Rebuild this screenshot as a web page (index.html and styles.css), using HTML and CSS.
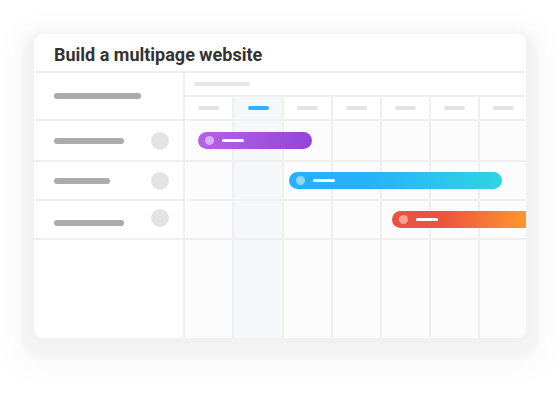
FILE: index.html
```html
<!DOCTYPE html>
<html>
<head>
<meta charset="utf-8">
<link rel="stylesheet" href="styles.css">
</head>
<body>
<div class="card">
  <div class="title">Build a multipage website</div>
  <div class="grid">
    <div class="lhead"><span class="pill pill-87"></span></div>
    <div class="rhead"><span class="hbar"></span></div>

    <div class="day c2"><span class="dbar"></span></div>
    <div class="day c3 hl"><span class="dbar blue"></span></div>
    <div class="day c4"><span class="dbar"></span></div>
    <div class="day c5"><span class="dbar"></span></div>
    <div class="day c6"><span class="dbar"></span></div>
    <div class="day c7"><span class="dbar"></span></div>
    <div class="day c8"><span class="dbar"></span></div>

    <div class="task r1"><span class="pill pill-70"></span><span class="avatar"></span></div>
    <div class="cell r1 c2"></div><div class="cell r1 c3 hl"></div><div class="cell r1 c4"></div><div class="cell r1 c5"></div><div class="cell r1 c6"></div><div class="cell r1 c7"></div><div class="cell r1 c8"></div>

    <div class="task r2"><span class="pill pill-56"></span><span class="avatar"></span></div>
    <div class="cell r2 c2"></div><div class="cell r2 c3 hl"></div><div class="cell r2 c4"></div><div class="cell r2 c5"></div><div class="cell r2 c6"></div><div class="cell r2 c7"></div><div class="cell r2 c8"></div>

    <div class="task r3 up"><span class="pill pill-70 down"></span><span class="avatar"></span></div>
    <div class="cell r3 c2"></div><div class="cell r3 c3 hl"></div><div class="cell r3 c4"></div><div class="cell r3 c5"></div><div class="cell r3 c6"></div><div class="cell r3 c7"></div><div class="cell r3 c8"></div>

    <div class="fill-left"></div>
    <div class="fill c2"></div><div class="fill c3 hl"></div><div class="fill c4"></div><div class="fill c5"></div><div class="fill c6"></div><div class="fill c7"></div><div class="fill c8"></div>

    <div class="bar purple r1" style="margin-left:15px;width:114px"><span class="dot"></span><span class="line"></span></div>
    <div class="bar blue-bar r2" style="margin-left:106px;width:213px"><span class="dot"></span><span class="line"></span></div>
    <div class="bar orange r3" style="margin-left:209px;width:140px"><span class="dot"></span><span class="line"></span></div>
  </div>
</div>
</body>
</html>
```
FILE: styles.css
```css
* { box-sizing: border-box; }
html, body { margin: 0; padding: 0; background: #fff; }
body {
  min-height: 399px;
  padding: 34px 34px 0 34px;
  font-family: Roboto, "Liberation Sans", Arial, sans-serif;
}
.card {
  width: 492px;
  height: 304px;
  background: #fff;
  border-radius: 9px;
  overflow: hidden;
  display: flex;
  flex-direction: column;
  box-shadow: 0 8px 10px 12px rgba(0,0,0,0.035), 0 12px 26px 24px rgba(0,0,0,0.02);
}
.title {
  height: 39px;
  flex: none;
  padding: 10px 0 0 20px;
  font-size: 18px;
  font-weight: 700;
  color: #333;
  border-bottom: 2px solid #efefef;
}
.grid {
  flex: 1;
  display: grid;
  grid-template-columns: 149px 49px 50px 49px 49px 49px 49px 49px;
  grid-template-rows: 24px 24px 41px 39px 39px 1fr;
  overflow: hidden;
}
.c2 { grid-column: 2; }
.c3 { grid-column: 3; }
.c4 { grid-column: 4; }
.c5 { grid-column: 5; }
.c6 { grid-column: 6; }
.c7 { grid-column: 7; }
.c8 { grid-column: 8; }
.lhead {
  grid-column: 1;
  grid-row: 1 / 3;
  border-bottom: 2px solid #efefef;
  display: flex;
  align-items: center;
  padding-left: 20px;
}
.rhead {
  grid-column: 2 / -1;
  grid-row: 1;
  border-left: 2px solid #efefef;
  border-bottom: 2px solid #efefef;
  padding: 9px 0 0 9px;
}
.hbar {
  display: block;
  width: 56px;
  height: 4px;
  border-radius: 2px;
  background: #e6e6e6;
}
.day {
  grid-row: 2;
  border-left: 2px solid #efefef;
  border-bottom: 2px solid #efefef;
  display: flex;
  justify-content: center;
  align-items: center;
  background: #fff;
}
.dbar {
  width: 21px;
  height: 4px;
  border-radius: 2px;
  background: #e3e3e3;
}
.dbar.blue { background: #2bb3fb; }
.hl { background: #f6f7fb !important; }
.task {
  grid-column: 1;
  border-bottom: 2px solid #efefef;
  display: flex;
  align-items: center;
  padding-left: 20px;
}
.r1 { grid-row: 3; }
.r2 { grid-row: 4; }
.r3 { grid-row: 5; }
.pill {
  display: block;
  height: 6px;
  border-radius: 3px;
  background: #ababab;
}
.pill-87 { width: 87px; }
.pill-70 { width: 70px; }
.pill-56 { width: 56px; }
.avatar {
  width: 18px;
  height: 18px;
  border-radius: 50%;
  background: #e3e3e3;
  margin-left: auto;
  margin-right: 14px;
}
.task.up { align-items: flex-start; padding-top: 8px; }
.task.up .pill.down { margin-top: 11px; }
.cell {
  border-left: 2px solid #efefef;
  border-bottom: 2px solid #efefef;
  background: #fcfcfc;
}
.fill-left { grid-row: 6; grid-column: 1; }
.fill {
  grid-row: 6;
  border-left: 2px solid #efefef;
  background: #fcfcfc;
}
.bar {
  grid-column: 2 / -1;
  align-self: center;
  justify-self: start;
  height: 17px;
  margin-bottom: 3px;
  border-radius: 9px;
  display: flex;
  align-items: center;
  padding-left: 7px;
  gap: 8px;
}
.bar .dot {
  width: 9px;
  height: 9px;
  border-radius: 50%;
}
.bar .line {
  width: 22px;
  height: 3px;
  border-radius: 2px;
  background: #fff;
}
.purple { background: linear-gradient(90deg, #b662e6, #9145d8); }
.purple .dot { background: #d6aef2; }
.blue-bar { background: linear-gradient(90deg, #27b0fc 35%, #2fd5e0); }
.blue-bar .dot { background: #8dd6fd; }
.orange { background: linear-gradient(90deg, #ea5340 35%, #ff952e 95%); }
.orange .dot { background: #f5a394; }
```
